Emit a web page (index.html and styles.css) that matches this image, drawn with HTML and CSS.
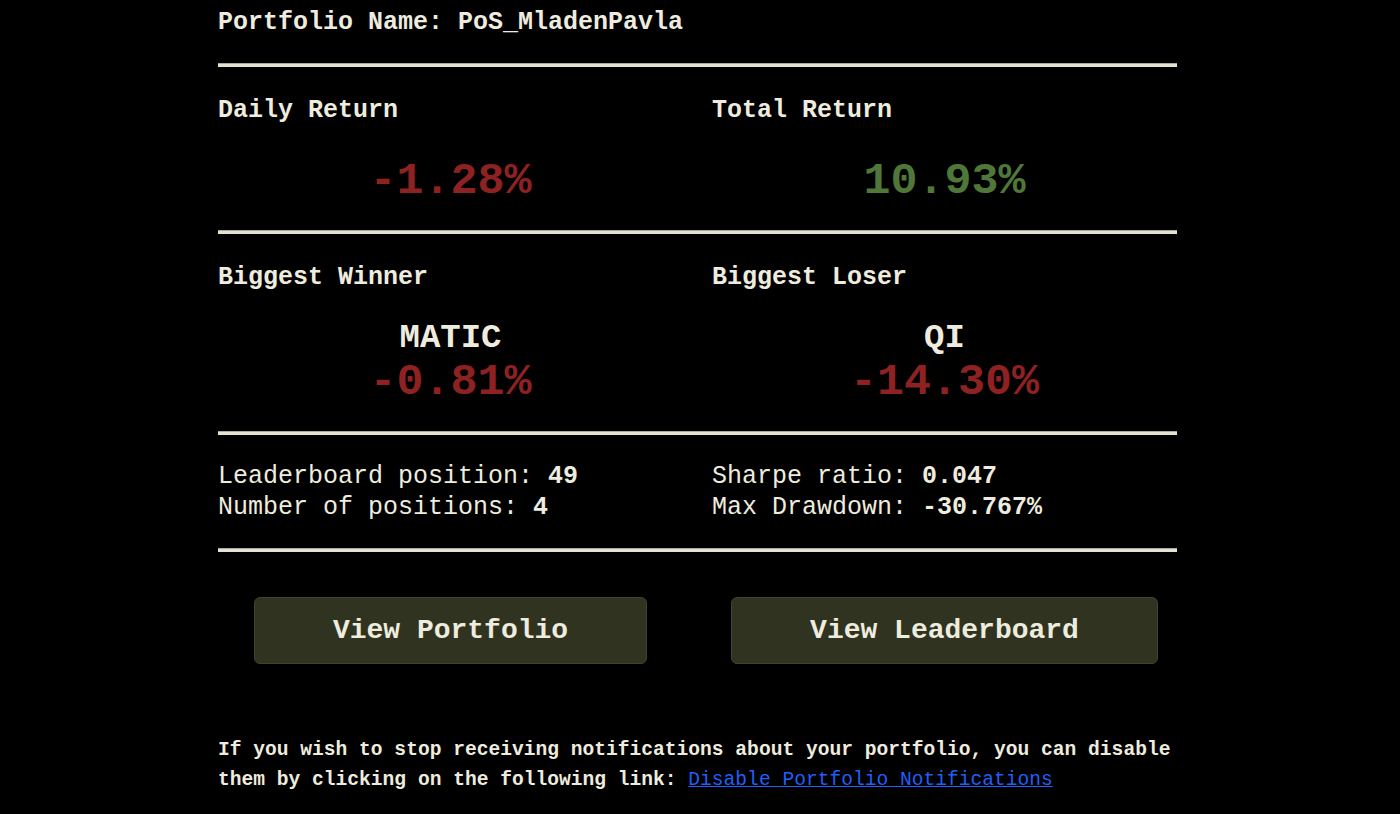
FILE: index.html
```html
<!DOCTYPE html>
<html lang="en">
<head>
  <meta charset="UTF-8">
  <title>Portfolio Update</title>
  <link rel="stylesheet" href="styles.css">
</head>
<body>
<div class="report">
  <h3 class="portfolio-name">Portfolio Name: PoS_MladenPavla</h3>
  <div class="rule"></div>

  <div class="row">
    <div class="cell">
      <h4>Daily Return</h4>
      <p class="big loss">-1.28%</p>
    </div>
    <div class="cell">
      <h4>Total Return</h4>
      <p class="big gain">10.93%</p>
    </div>
  </div>
  <div class="rule"></div>

  <div class="row">
    <div class="cell">
      <h4>Biggest Winner</h4>
      <p class="ticker">MATIC</p>
      <p class="big loss tight">-0.81%</p>
    </div>
    <div class="cell">
      <h4>Biggest Loser</h4>
      <p class="ticker">QI</p>
      <p class="big loss tight">-14.30%</p>
    </div>
  </div>
  <div class="rule"></div>

  <div class="row stats">
    <div class="cell">
      <p>Leaderboard position: <strong>49</strong></p>
      <p>Number of positions: <strong>4</strong></p>
    </div>
    <div class="cell">
      <p>Sharpe ratio: <strong>0.047</strong></p>
      <p>Max Drawdown: <strong>-30.767%</strong></p>
    </div>
  </div>
  <div class="rule"></div>

  <div class="row buttons">
    <div class="cell">
      <a class="button" href="#">View Portfolio</a>
    </div>
    <div class="cell">
      <a class="button" href="#">View Leaderboard</a>
    </div>
  </div>

  <p class="footer">If you wish to stop receiving notifications about your portfolio, you can disable them by clicking on the following link: <a href="#">Disable Portfolio Notifications</a></p>
</div>
</body>
</html>
```

FILE: styles.css
```css
body {
  margin: 0;
  padding: 0 5px 0 0;
  background: #000;
  color: #eeecdf;
  font-family: "Liberation Mono", "Courier New", monospace;
}
.report {
  width: 959px;
  margin: 0 auto;
}
.portfolio-name {
  margin: 0;
  padding-top: 8px;
  font-size: 25px;
  line-height: 30px;
  font-weight: bold;
}
.rule {
  height: 3px;
  margin-top: 25px;
  background: #e3e2d4;
  border-top: 1px solid #a9a89c;
}
.row {
  display: grid;
  grid-template-columns: 465px 465px;
  column-gap: 29px;
}
.cell h4 {
  margin: 29px 0 0;
  font-size: 25px;
  line-height: 30px;
  font-weight: bold;
}
.big {
  margin: 33px 0 0;
  text-align: center;
  font-size: 45px;
  line-height: 46px;
  font-weight: bold;
}
.tight {
  margin-top: 0;
}
.loss {
  color: #8e2121;
}
.gain {
  color: #4f773a;
}
.ticker {
  margin: 24px 0 0;
  text-align: center;
  font-size: 34px;
  line-height: 43px;
  font-weight: bold;
}
.stats {
  padding-top: 26px;
}
.stats p {
  margin: 0;
  font-size: 25px;
  line-height: 31px;
}
.stats strong {
  font-weight: bold;
}
.buttons {
  padding-top: 45px;
}
.buttons .cell {
  text-align: center;
}
.button {
  display: inline-block;
  padding: 0 78px;
  height: 65px;
  line-height: 65px;
  background: #2f3320;
  border: 1px solid #40432f;
  border-radius: 6px;
  color: #eeecdf;
  text-decoration: none;
  font-size: 28px;
  font-weight: bold;
}
.footer {
  margin: 71px 0 0;
  font-size: 19.6px;
  line-height: 30px;
  font-weight: bold;
}
.footer a {
  color: #1f5ffa;
  font-weight: normal;
}
```
